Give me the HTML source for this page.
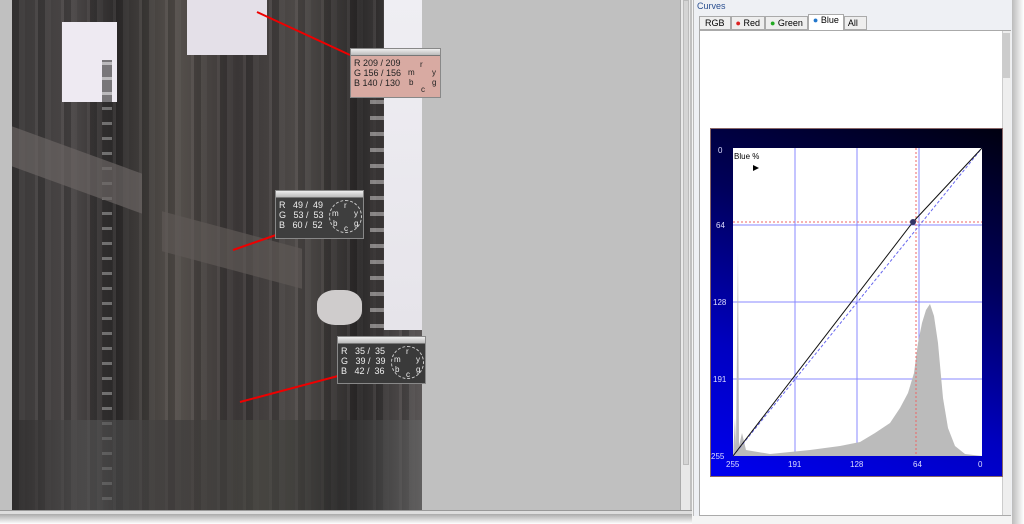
<!DOCTYPE html>
<html><head><style>
*{margin:0;padding:0;box-sizing:border-box}
body{width:1024px;height:524px;overflow:hidden;background:#fff;font-family:"Liberation Sans",sans-serif;position:relative}
.a{position:absolute}
.pop{position:absolute;border:1px solid #888;font-size:9px;line-height:10px;}
.pop .t{height:7px;background:linear-gradient(#eee,#bbb);border-bottom:1px solid #777}
.pop .v{padding:2px 0 0 3px;white-space:pre;font-family:"Liberation Sans",sans-serif}
.dial{position:absolute;left:53px;top:9px;width:33px;height:33px;border:1px dashed #ccc;border-radius:50%;font-size:8px;line-height:8px}
.dial span{position:absolute}
</style></head><body>
<div class="a" style="left:0;top:0;width:1024px;height:524px;background:#f4f4f4"></div>
<div class="a" style="left:0;top:0;width:692px;height:512px;background:#c0c0c0"></div>
<!-- photo -->
<div class="a" style="left:12px;top:0;width:410px;height:510px;background:linear-gradient(90deg,#3a3838 0%,#4a4646 15%,#2e2c2c 25%,#55504c 40%,#3a3636 55%,#4e4a48 70%,#2c2a2a 85%,#5a5656 100%);overflow:hidden">
 <div class="a" style="left:0;top:0;width:410px;height:510px;background:repeating-linear-gradient(90deg,rgba(0,0,0,.15) 0 7px,rgba(255,255,255,.03) 7px 13px,rgba(0,0,0,0) 13px 23px,rgba(200,190,190,.08) 23px 26px);"></div>
 <div class="a" style="left:50px;top:22px;width:55px;height:80px;background:#eeeaf2"></div>
 <div class="a" style="left:175px;top:0;width:80px;height:55px;background:#e4e0e8"></div>
 <div class="a" style="left:372px;top:0;width:38px;height:330px;background:linear-gradient(#efeef3,#e6e4ea)"></div>
 <div class="a" style="left:358px;top:60px;width:14px;height:300px;background:repeating-linear-gradient(0deg,#aaa6a6 0 4px,#3a3636 4px 16px);opacity:.7"></div>
 <div class="a" style="left:90px;top:60px;width:10px;height:440px;background:repeating-linear-gradient(0deg,#999 0 3px,#2a2828 3px 15px);opacity:.6"></div>
 <div class="a" style="left:0;top:150px;width:130px;height:40px;background:#6a6462;transform:skewY(20deg);opacity:.7"></div>
 <div class="a" style="left:150px;top:230px;width:140px;height:40px;background:#5e5856;transform:skewY(15deg);opacity:.7"></div>
 <div class="a" style="left:0;top:420px;width:410px;height:90px;background:linear-gradient(90deg,#2a2828,#555,#3a3838,#4a4a44,#2a2a2a,#666);opacity:.6"></div>
 <div class="a" style="left:305px;top:290px;width:45px;height:35px;background:#cfcccc;border-radius:40%"></div>
</div>
<svg class="a" style="left:0;top:0" width="440" height="420">
<line x1="257" y1="12" x2="350" y2="55" stroke="#e00" stroke-width="2"/>
<line x1="233" y1="250" x2="276" y2="235" stroke="#e00" stroke-width="2"/>
<line x1="240" y1="402" x2="338" y2="376" stroke="#e00" stroke-width="2"/>
</svg>
<div class="pop" style="left:350px;top:48px;width:91px;height:50px;background:#d8aaa2;color:#222"><div class="t"></div><div class="v">R 209 / 209
G 156 / 156
B 140 / 130</div><div class="dial" style="border-color:transparent;left:54px"><span style="left:14px;top:2px">r</span><span style="left:2px;top:10px">m</span><span style="left:26px;top:10px">y</span><span style="left:3px;top:20px">b</span><span style="left:26px;top:20px">g</span><span style="left:15px;top:27px">c</span></div></div>
<div class="pop" style="left:275px;top:190px;width:89px;height:49px;background:#3e3e3e;color:#eee"><div class="t"></div><div class="v">R   49 /  49
G   53 /  53
B   60 /  52</div><div class="dial"><span style="left:14px;top:1px">r</span><span style="left:2px;top:9px">m</span><span style="left:24px;top:9px">y</span><span style="left:3px;top:19px">b</span><span style="left:24px;top:19px">g</span><span style="left:14px;top:24px">c</span></div></div>
<div class="pop" style="left:337px;top:336px;width:89px;height:48px;background:#3a3a3a;color:#eee"><div class="t"></div><div class="v">R   35 /  35
G   39 /  39
B   42 /  36</div><div class="dial"><span style="left:14px;top:1px">r</span><span style="left:2px;top:9px">m</span><span style="left:24px;top:9px">y</span><span style="left:3px;top:19px">b</span><span style="left:24px;top:19px">g</span><span style="left:14px;top:24px">c</span></div></div>
<!-- scrollbar -->
<div class="a" style="left:680px;top:0;width:10px;height:512px;background:#e8e8e8;border-left:1px solid #aaa"></div>
<div class="a" style="left:683px;top:0;width:6px;height:465px;background:#d4d4d4;border:1px solid #bbb"></div>
<div class="a" style="left:0;top:510px;width:692px;height:4px;background:#ddd;border-top:1px solid #999"></div>
<div class="a" style="left:0;top:514px;width:692px;height:10px;background:linear-gradient(#aaa,#fff)"></div>
<!-- right panel -->
<div class="a" style="left:693px;top:0;width:320px;height:516px;background:#eef0f4;border-left:1px solid #bbb;border-right:1px solid #bbb"></div>
<div class="a" style="left:697px;top:1px;font-size:9px;color:#2a4f90">Curves</div>
<div class="a" style="left:699px;top:16px;height:14px;font-size:9px;display:flex">
 <div style="border:1px solid #aaa;padding:1px 5px;background:#eee">RGB</div>
 <div style="border:1px solid #aaa;padding:1px 4px;background:#eee"><span style="color:#d22">●</span> Red</div>
 <div style="border:1px solid #aaa;padding:1px 4px;background:#eee"><span style="color:#2a2">●</span> Green</div>
 <div style="border:1px solid #aaa;border-bottom:none;padding:0 4px;background:#fff;margin-top:-2px;height:16px"><span style="color:#27c">●</span> Blue</div>
 <div style="border:1px solid #aaa;padding:1px 8px 1px 3px;background:#eee">All</div>
</div>
<div class="a" style="left:699px;top:30px;width:312px;height:486px;background:#fff;border:1px solid #aaa"></div>
<div class="a" style="left:1002px;top:31px;width:9px;height:484px;background:#eee;border-left:1px solid #ccc"></div>
<div class="a" style="left:1003px;top:33px;width:7px;height:45px;background:#ccc"></div>
<div class="a" style="left:1012px;top:0;width:12px;height:524px;background:linear-gradient(90deg,#bbb,#fff)"></div>
<!-- curves plot -->
<div class="a" style="left:710px;top:128px;width:293px;height:349px;background:linear-gradient(200deg,#000010 0%,#00005a 35%,#0000c0 70%,#0000f0 100%);border:1px solid #866"></div>
<svg class="a" style="left:710px;top:128px" width="293" height="349" font-family="Liberation Sans" font-size="8" fill="#ddf">
<rect x="23" y="20" width="249" height="308" fill="#fff"/>
<g stroke="#88f" stroke-width="1">
<line x1="85" y1="20" x2="85" y2="328"/><line x1="147" y1="20" x2="147" y2="328"/><line x1="209" y1="20" x2="209" y2="328"/>
<line x1="23" y1="97" x2="272" y2="97"/><line x1="23" y1="174" x2="272" y2="174"/><line x1="23" y1="251" x2="272" y2="251"/>
</g>
<path d="M23 328 L25 290 L26 318 L28 120 L29 318 L32 305 L36 322 L60 326 L100 322 L130 318 L150 314 L165 305 L180 295 L190 280 L198 265 L204 245 L208 215 L212 195 L216 182 L220 176 L224 188 L228 215 L233 270 L238 300 L245 318 L255 326 L272 328Z" fill="#bbb"/>
<g stroke="#e66" stroke-dasharray="2,2"><line x1="206" y1="20" x2="206" y2="328"/><line x1="23" y1="94" x2="272" y2="94"/></g>
<line x1="23" y1="328" x2="272" y2="20" stroke="#66e" stroke-dasharray="3,2"/>
<path d="M23 328 L203 94 L272 20" stroke="#111" fill="none"/>
<circle cx="203" cy="94" r="3" fill="#336"/>
<text x="24" y="31" fill="#000">Blue %</text><path d="M43 37 l6 3 l-6 3z" fill="#000"/>
<text x="8" y="25">0</text><text x="6" y="100">64</text><text x="3" y="177">128</text><text x="3" y="254">191</text><text x="1" y="331">255</text>
<text x="16" y="339">255</text><text x="78" y="339">191</text><text x="140" y="339">128</text><text x="203" y="339">64</text><text x="268" y="339">0</text>
</svg>
</body></html>
